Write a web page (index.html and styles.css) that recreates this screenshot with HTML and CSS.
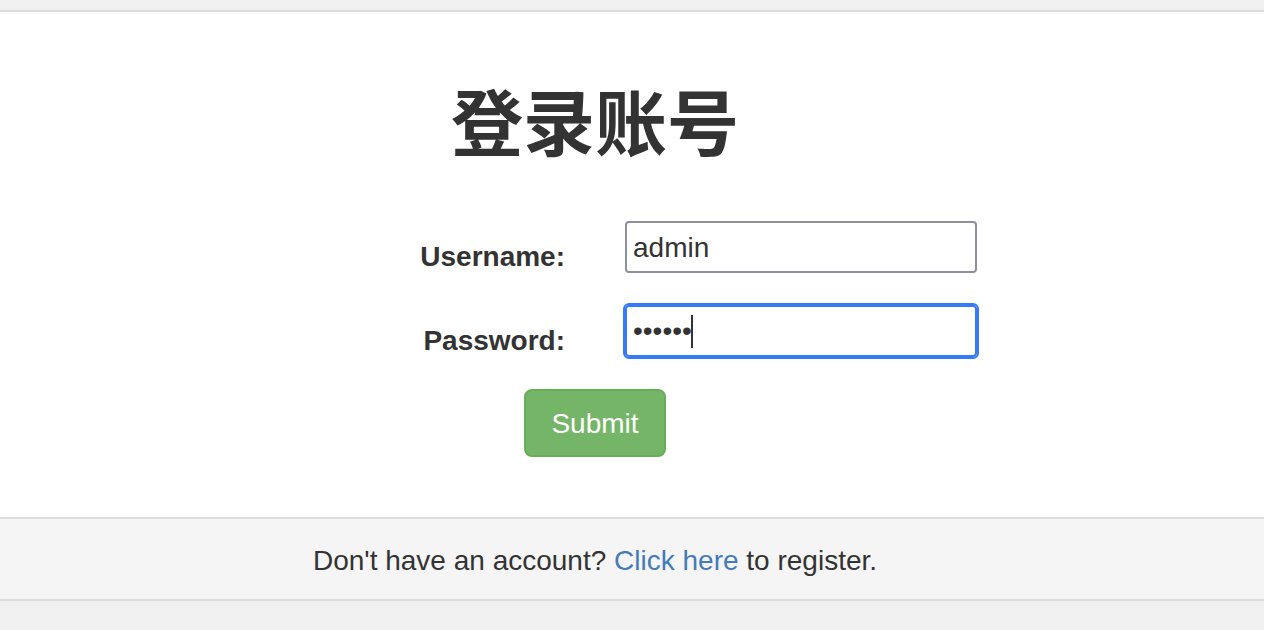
FILE: index.html
```html
<!DOCTYPE html>
<html lang="zh">
<head>
<meta charset="utf-8">
<title>登录账号</title>
<link rel="stylesheet" href="styles.css">
</head>
<body>
<main class="panel">
  <form class="login">
    <h1 class="title">登录账号</h1>
    <div class="row">
      <label class="label" for="username">Username:</label>
      <input class="field" id="username" type="text" value="admin">
    </div>
    <div class="row">
      <label class="label" for="password">Password:</label>
      <div class="secret">
        <input class="field field-active" id="password" type="password" value="123456">
        <span class="caret"></span>
      </div>
    </div>
    <button class="submit" type="button">Submit</button>
  </form>
  <footer class="footer">Don't have an account? <a class="link" href="#">Click here</a> to register.</footer>
</main>
</body>
</html>
```
FILE: styles.css
```css
* { box-sizing: border-box; }
body {
  margin: 0;
  padding-top: 10px;
  background: #f0f0f0;
  color: #333;
  font: 28px/40px "Liberation Sans", "Noto Sans CJK SC", sans-serif;
}
.panel {
  background: #fff;
  border-top: 2px solid #ddd;
  border-bottom: 2px solid #ddd;
  box-shadow: 0 2px 4px rgba(0, 0, 0, 0.05);
}
.login {
  display: flex;
  flex-direction: column;
  align-items: center;
  padding: 73px 74px 60px 0;
}
.title {
  margin: 0 0 56px;
  font-size: 72px;
  line-height: 80px;
  font-weight: 700;
}
.row {
  display: flex;
  align-items: flex-start;
  gap: 60px;
  width: 764px;
  height: 84px;
}
.label {
  width: 352px;
  padding-top: 16px;
  text-align: right;
  font-weight: 700;
}
.field {
  display: block;
  width: 352px;
  height: 52px;
  padding: 4px 6px 2px;
  border: 2px solid #8f8f9d;
  border-radius: 4px;
  background: #fff;
  color: #333;
  font: inherit;
}
.secret { position: relative; }
.field-active {
  padding: 2px 6px;
  outline: 2px solid #357af6;
  border-color: #357af6;
}
.caret {
  position: absolute;
  left: 66px;
  top: 10px;
  width: 2px;
  height: 33px;
  background: #333;
}
.submit {
  height: 68px;
  padding: 2px 25px 0;
  border: 2px solid #67ae58;
  border-radius: 8px;
  background: #75b567;
  color: #fff;
  font: inherit;
}
.footer {
  padding: 22px 74px 18px 0;
  border-top: 2px solid #ddd;
  background: #f5f5f5;
  text-align: center;
}
.link { color: #447bba; text-decoration: none; }
```
